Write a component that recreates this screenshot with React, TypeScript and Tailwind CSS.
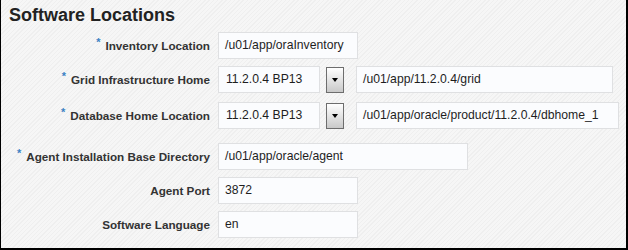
import React from "react";

const Label = ({ text, required }: { text: string; required?: boolean }) => (
    <div className="w-[209px] shrink-0 text-right pr-0 text-[11.7px] font-bold text-[#333] whitespace-nowrap">
        {required && <span className="text-[#3b82c4] text-[11px] relative -top-[4px] mr-[5px]">*</span>}
        {text}
    </div>
);

const Field = ({ value, width }: { value: string; width: string }) => (
    <div className={`${width} h-[27px] border border-[#dfe0e2] bg-[#fbfcfe] flex items-center pl-[6px] text-[12.2px] text-[#1e1e1e] whitespace-nowrap`}>
        {value}
    </div>
);

const Select = ({ value }: { value: string }) => (
    <div className="flex items-center">
        <div className="w-[102px] h-[27px] border border-[#dfe0e2] bg-[#fbfcfe] flex items-center pl-[7px] text-[12.2px] text-[#1e1e1e]">
            {value}
        </div>
        <div className="ml-[6px] w-[18px] h-[26px] border border-[#6d6d6d] bg-[linear-gradient(#ffffff,#c9c9c9)] flex items-start justify-center pt-[10px]">
            <div className="w-0 h-0 border-l-[3.5px] border-r-[3.5px] border-t-[4px] border-l-transparent border-r-transparent border-t-black" />
        </div>
    </div>
);

export default function App() {
    return (
        <div
            className="w-[628px] h-[250px] border-l border-r-2 border-b-2 border-black bg-[#f3f3f3] bg-[repeating-linear-gradient(135deg,#efefef_0px,#efefef_1px,#f6f6f6_1px,#f6f6f6_3px)] font-['Liberation_Sans',Arial,sans-serif]"
        >
            <h1 className="pl-[8px] pt-[4px] text-[18px] font-bold text-[#222] leading-[22px]">Software Locations</h1>

            <div className="mt-[6px] flex items-center gap-[8px]">
                <Label text="Inventory Location" required />
                <Field value="/u01/app/oraInventory" width="w-[140px]" />
            </div>

            <div className="mt-[7px] flex items-center gap-[8px]">
                <Label text="Grid Infrastructure Home" required />
                <Select value="11.2.0.4 BP13" />
                <div className="ml-[4px]">
                    <Field value="/u01/app/11.2.0.4/grid" width="w-[257px]" />
                </div>
            </div>

            <div className="mt-[9px] flex items-center gap-[8px]">
                <Label text="Database Home Location" required />
                <Select value="11.2.0.4 BP13" />
                <div className="ml-[4px]">
                    <Field value="/u01/app/oracle/product/11.2.0.4/dbhome_1" width="w-[263px]" />
                </div>
            </div>

            <div className="mt-[14px] flex items-center gap-[8px]">
                <Label text="Agent Installation Base Directory" required />
                <Field value="/u01/app/oracle/agent" width="w-[250px]" />
            </div>

            <div className="mt-[7px] flex items-center gap-[8px]">
                <Label text="Agent Port" />
                <Field value="3872" width="w-[140px]" />
            </div>

            <div className="mt-[7px] flex items-center gap-[8px]">
                <Label text="Software Language" />
                <Field value="en" width="w-[140px]" />
            </div>
        </div>
    );
}
